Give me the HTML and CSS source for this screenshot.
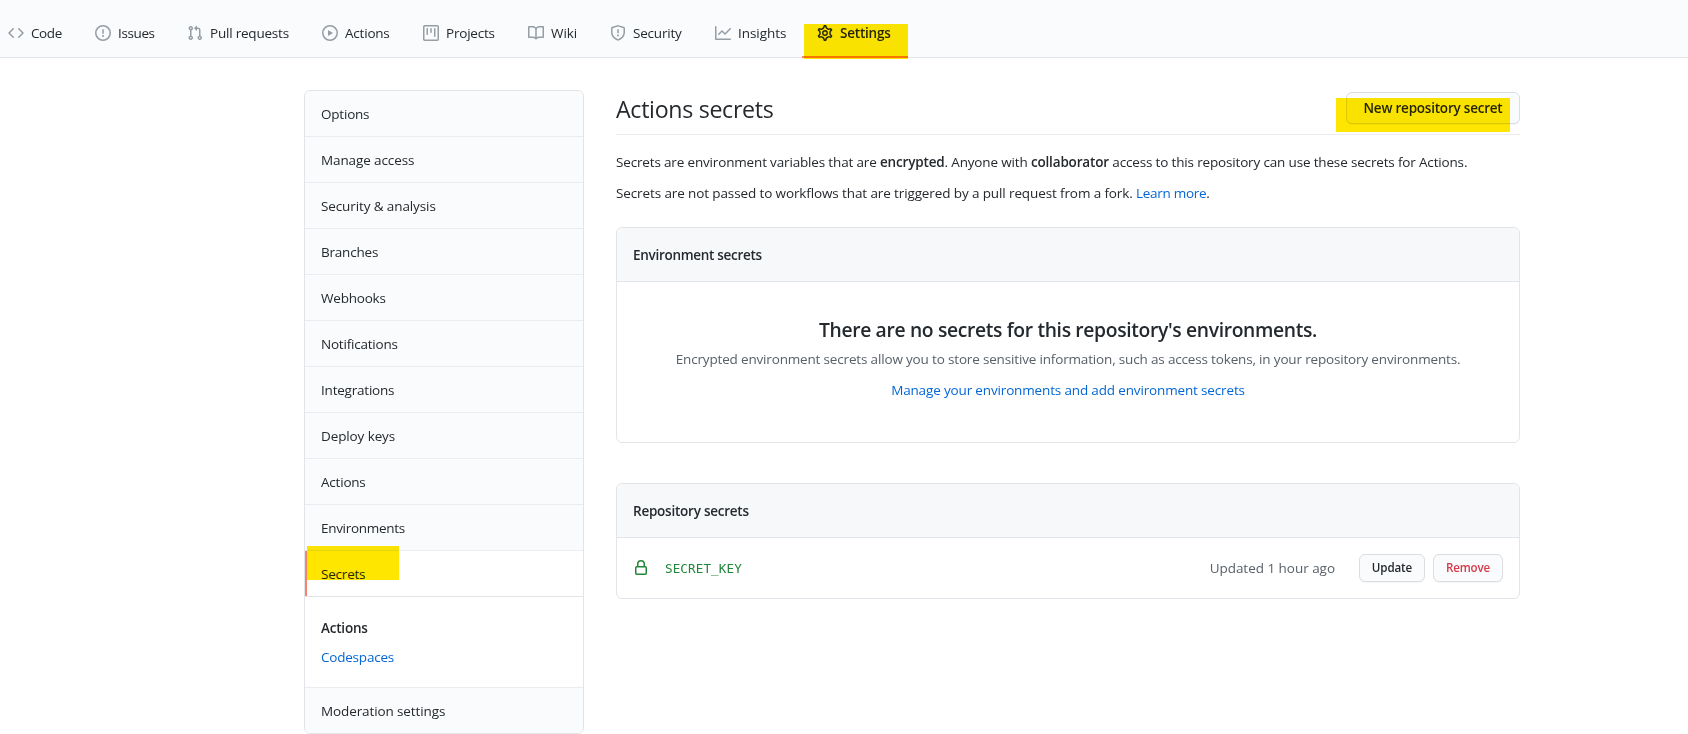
FILE: index.html
```html
<!DOCTYPE html>
<html lang="en">
<head>
<meta charset="utf-8">
<title>Actions secrets</title>
<link rel="stylesheet" href="styles.css">
</head>
<body>
<nav class="repo-nav">
  <a class="tab"><svg class="icon" viewBox="0 0 16 16"><path fill-rule="evenodd" d="M4.72 3.22a.75.75 0 011.06 1.06L2.06 8l3.72 3.72a.75.75 0 11-1.06 1.06L.47 8.53a.75.75 0 010-1.06l4.25-4.25zm6.56 0a.75.75 0 10-1.06 1.06L13.94 8l-3.72 3.72a.75.75 0 101.06 1.06l4.25-4.25a.75.75 0 000-1.06l-4.25-4.25z"/></svg><span class="tight">Code</span></a>
  <a class="tab"><svg class="icon" viewBox="0 0 16 16"><path fill-rule="evenodd" d="M8 1.5a6.5 6.5 0 100 13 6.5 6.5 0 000-13zM0 8a8 8 0 1116 0A8 8 0 010 8zm9 3a1 1 0 11-2 0 1 1 0 012 0zm-.25-6.250a.75.75 0 00-1.5 0v3.500a.75.75 0 001.500 0v-3.500z"/></svg><span class="tight">Issues</span></a>
  <a class="tab"><svg class="icon" viewBox="0 0 16 16"><path fill-rule="evenodd" d="M7.177 3.073L9.573.677A.25.25 0 0110 .854v4.792a.25.25 0 01-.427.177L7.177 3.427a.25.25 0 010-.354zM3.750 2.500a.75.75 0 100 1.500.75.75 0 000-1.500zm-2.250.75a2.250 2.250 0 113 2.122v5.256a2.251 2.251 0 11-1.500 0V5.372A2.250 2.250 0 011.500 3.250zM11 2.500h-1V4h1a1 1 0 011 1v5.628a2.251 2.251 0 101.500 0V5A2.500 2.500 0 0011 2.500zm1 10.250a.75.75 0 111.500 0 .75.75 0 01-1.500 0zM3.750 12a.75.75 0 100 1.500.75.75 0 000-1.500z"/></svg><span>Pull requests</span></a>
  <a class="tab"><svg class="icon" viewBox="0 0 16 16"><path fill-rule="evenodd" d="M1.500 8a6.500 6.500 0 1113 0 6.500 6.500 0 01-13 0zM8 0a8 8 0 100 16A8 8 0 008 0zM6.379 5.227A.25.25 0 006 5.442v5.117a.25.25 0 00.379.214l4.264-2.559a.25.25 0 000-.428L6.379 5.227z"/></svg><span>Actions</span></a>
  <a class="tab"><svg class="icon" viewBox="0 0 16 16"><path fill-rule="evenodd" d="M1.750 0A1.750 1.750 0 000 1.750v12.500C0 15.216.784 16 1.750 16h12.500A1.750 1.750 0 0016 14.250V1.750A1.750 1.750 0 0014.250 0H1.750zM1.500 1.750a.25.25 0 01.25-.25h12.500a.25.25 0 01.25.25v12.500a.25.25 0 01-.25.25H1.750a.25.25 0 01-.25-.25V1.750zM11.750 3a.75.75 0 00-.75.75v7.500a.75.75 0 001.500 0v-7.500a.75.75 0 00-.75-.75zm-8.250.75a.75.75 0 011.500 0v5.500a.75.75 0 01-1.500 0v-5.500zM8 3a.75.75 0 00-.75.75v3.500a.75.75 0 001.500 0v-3.500A.75.75 0 008 3z"/></svg><span>Projects</span></a>
  <a class="tab"><svg class="icon" viewBox="0 0 16 16"><path fill-rule="evenodd" d="M0 1.750A.75.75 0 01.75 1h4.253c1.227 0 2.317.590 3 1.501A3.744 3.744 0 0111.006 1h4.245a.75.75 0 01.75.75v10.500a.75.75 0 01-.75.75h-4.507a2.250 2.250 0 00-1.591.659l-.622.621a.75.75 0 01-1.060 0l-.622-.621A2.250 2.250 0 005.258 13H.75a.75.75 0 01-.75-.75V1.750zm8.755 3a2.250 2.250 0 012.250-2.250H14.500v9h-3.757c-.710 0-1.400.201-1.992.572l.004-7.322zm-1.504 7.324l.004-5.073-.002-2.253A2.250 2.250 0 005.003 2.500H1.500v9h3.757a3.750 3.750 0 011.994.574z"/></svg><span class="loose">Wiki</span></a>
  <a class="tab"><svg class="icon" viewBox="0 0 16 16"><path fill-rule="evenodd" d="M7.467.133a1.750 1.750 0 011.066 0l5.250 1.680A1.750 1.750 0 0115 3.480V7c0 1.566-.320 3.182-1.303 4.682-.983 1.498-2.585 2.813-5.032 3.855a1.700 1.700 0 01-1.330 0c-2.447-1.042-4.049-2.357-5.032-3.855C1.320 10.182 1 8.566 1 7V3.480a1.750 1.750 0 011.217-1.667l5.250-1.680zm.610 1.429a.25.25 0 00-.153 0l-5.250 1.680a.25.25 0 00-.174.238V7c0 1.358.275 2.666 1.057 3.860.784 1.194 2.121 2.340 4.366 3.297a.2.2 0 00.154 0c2.245-.956 3.582-2.104 4.366-3.298C13.225 9.666 13.500 8.360 13.500 7V3.480a.25.25 0 00-.174-.237l-5.250-1.680zM9 10.500a1 1 0 11-2 0 1 1 0 012 0zm-.25-5.750a.75.75 0 10-1.500 0v3a.75.75 0 001.500 0v-3z"/></svg><span>Security</span></a>
  <a class="tab"><svg class="icon" viewBox="0 0 16 16"><path fill-rule="evenodd" d="M1.500 1.750a.75.75 0 00-1.500 0v12.500c0 .414.336.75.75.75h14.500a.75.75 0 000-1.500H1.500V1.750zm14.280 2.530a.75.75 0 00-1.060-1.060L10 7.940 7.530 5.470a.75.75 0 00-1.060 0L3.220 8.720a.75.75 0 001.060 1.060L7 7.060l2.470 2.470a.75.75 0 001.060 0l5.250-5.250z"/></svg><span class="loose">Insights</span></a>
  <a class="tab selected"><svg class="icon" viewBox="0 0 16 16"><g fill="none" stroke="currentColor" stroke-width="1.35"><path transform="translate(-.88 -.88) scale(1.11)" d="M7.429 1.525a6.593 6.593 0 011.142 0c.036.003.108.036.137.146l.289 1.105c.147.56.55.967.997 1.189.174.086.341.183.501.29.417.278.97.423 1.53.27l1.102-.303c.11-.03.175.016.195.046.219.31.41.641.573.989.014.031.022.11-.059.19l-.815.806c-.411.406-.562.957-.53 1.456a4.588 4.588 0 010 .582c-.032.499.119 1.05.53 1.456l.815.806c.08.08.073.159.059.19a6.494 6.494 0 01-.573.99c-.02.029-.086.074-.195.045l-1.103-.303c-.559-.153-1.112-.008-1.529.27-.16.107-.327.204-.5.29-.449.222-.851.628-.998 1.189l-.289 1.105c-.029.11-.101.143-.137.146a6.613 6.613 0 01-1.142 0c-.036-.003-.108-.037-.137-.146l-.289-1.105c-.147-.56-.55-.967-.997-1.189a4.502 4.502 0 01-.501-.29c-.417-.278-.97-.423-1.53-.27l-1.102.303c-.11.03-.175-.016-.195-.046a6.492 6.492 0 01-.573-.989c-.014-.031-.022-.11.059-.19l.815-.806c.411-.406.562-.957.53-1.456a4.587 4.587 0 010-.582c.032-.499-.119-1.05-.53-1.456l-.815-.806c-.08-.08-.073-.159-.059-.19a6.44 6.44 0 01.573-.99c.02-.029.086-.075.195-.045l1.103.303c.559.153 1.112.008 1.529-.27.16-.107.327-.204.5-.29.449-.222.851-.628.998-1.189l.289-1.105c.029-.11.101-.143.137-.146z"/><circle cx="8" cy="8" r="2.25"/></g></svg><span>Settings</span><i class="mark mark-tab"></i></a>
</nav>
<div class="page">
  <aside class="menu">
    <a class="menu-item">Options</a>
    <a class="menu-item wide">Manage access</a>
    <a class="menu-item wide">Security &amp; analysis</a>
    <a class="menu-item">Branches</a>
    <a class="menu-item">Webhooks</a>
    <a class="menu-item">Notifications</a>
    <a class="menu-item">Integrations</a>
    <a class="menu-item wide">Deploy keys</a>
    <a class="menu-item">Actions</a>
    <a class="menu-item narrow">Environments</a>
    <a class="menu-item current">Secrets<i class="mark mark-menu"></i></a>
    <div class="submenu"><a class="active">Actions</a><a class="link">Codespaces</a></div>
    <a class="menu-item wide">Moderation settings</a>
  </aside>
  <main>
    <header class="heading">
      <h1>Actions secrets</h1>
      <button class="btn btn-new">New repository secret</button>
      <i class="mark mark-new"></i>
    </header>
    <p class="intro first">Secrets are environment variables that are <strong>encrypted</strong>. Anyone with <strong>collaborator</strong> access to this repository can use these secrets for Actions.</p>
    <p class="intro second">Secrets are not passed to workflows that are triggered by a pull request from a fork. <a class="link learn">Learn more</a>.</p>
    <section class="box">
      <h3 class="box-header environment">Environment secrets</h3>
      <div class="blank">
        <h2>There are no secrets for this repository's environments.</h2>
        <p class="muted">Encrypted environment secrets allow you to store sensitive information, such as access tokens, in your repository environments.</p>
        <p><a class="link">Manage your environments and add environment secrets</a></p>
      </div>
    </section>
    <section class="box repository">
      <h3 class="box-header">Repository secrets</h3>
      <div class="secret">
        <svg class="lock" viewBox="0 0 16 16"><path fill-rule="evenodd" d="M4 4v2h-.25A1.750 1.750 0 002 7.750v5.500c0 .966.784 1.750 1.750 1.750h8.500A1.750 1.750 0 0014 13.250v-5.500A1.750 1.750 0 0012.250 6H12V4a4 4 0 10-8 0zm6.500 2V4a2.500 2.500 0 00-5 0v2h5zM12 7.500h.25a.25.25 0 01.25.25v5.500a.25.25 0 01-.25.25h-8.500a.25.25 0 01-.25-.25v-5.500a.25.25 0 01.25-.25H12z"/></svg>
        <code>SECRET_KEY</code>
        <span class="updated">Updated 1 hour ago</span>
        <button class="btn btn-sm btn-update">Update</button>
        <button class="btn btn-sm btn-remove">Remove</button>
      </div>
    </section>
  </main>
</div>
</body>
</html>
```
FILE: styles.css
```css
* { box-sizing: border-box; }
body {
  margin: 0;
  height: 734px;
  overflow: hidden;
  background: #fff;
  color: #24292e;
  font: 13.5px/21px "Open Sans", "Noto Sans", sans-serif;
  letter-spacing: -0.21px;
}
h1, h2, h3, p { margin: 0; }
.link { color: #0366d6; }

.repo-nav {
  display: grid;
  grid-template-columns: 87px 92px 135px 101px 105px 82px 105px 103px 98px;
  height: 58px;
  padding-top: 8px;
  background: #fafbfc;
  border-bottom: 1px solid #e1e4e8;
}
.tab {
  display: flex;
  align-items: center;
  gap: 7px;
  height: 50px;
  padding-left: 8px;
  white-space: nowrap;
}
.icon { flex: none; width: 16px; height: 16px; fill: #959da5; }
.tight { letter-spacing: -0.38px; }
.loose { letter-spacing: -0.06px; }
.selected {
  position: relative;
  margin-left: -8px;
  padding-top: 2px;
  padding-left: 15px;
  border-bottom: 2px solid #f9826c;
  font-weight: 600;
}
.selected .icon { color: #24292e; }
.mark { position: absolute; background: #ffe600; mix-blend-mode: multiply; }
.mark-tab { left: 2px; right: 0; top: 16px; height: 35px; }

.page {
  display: grid;
  grid-template-columns: 280px 904px;
  gap: 32px;
  margin-left: 304px;
  padding-top: 32px;
  align-items: start;
}
.menu { border: 1px solid #e1e4e8; border-radius: 6px; }
.menu-item {
  display: block;
  height: 46px;
  padding: 13px 16px 0;
  border-bottom: 1px solid #eaecef;
  background: #fafbfc;
}
.menu-item:first-child { border-radius: 6px 6px 0 0; }
.menu-item:last-child { height: 45px; border-bottom: 0; border-radius: 0 0 6px 6px; }
.wide { letter-spacing: -0.11px; }
.narrow { letter-spacing: -0.3px; }
.current {
  position: relative;
  background: #fff;
  border-bottom-color: #e1e4e8;
  box-shadow: inset 2px 0 #f9826c;
}
.mark-menu { left: 2px; top: -5px; width: 92px; height: 34px; }
.submenu {
  display: grid;
  align-content: start;
  gap: 8px;
  height: 91px;
  padding: 21px 16px 0;
  border-bottom: 1px solid #eaecef;
}
.active { font-weight: 600; }

.heading {
  position: relative;
  display: flex;
  justify-content: space-between;
  height: 45px;
  border-bottom: 1px solid #eaecef;
}
h1 { font-size: 23.2px; line-height: 38px; font-weight: 400; letter-spacing: -0.31px; }
.btn {
  height: 32px;
  margin: 2px 0 0;
  padding: 0;
  border: 1px solid #dbdde0;
  border-radius: 6px;
  background: #fafbfc;
  color: #24292e;
  font: 600 13.5px/20px "Open Sans", "Noto Sans", sans-serif;
  letter-spacing: -0.22px;
  box-shadow: 0 1px 0 rgba(27, 31, 35, 0.04);
}
.btn-new { width: 174px; }
.mark-new { right: 10px; top: 8px; width: 174px; height: 34px; }
.intro { white-space: nowrap; }
.first { margin-top: 17px; letter-spacing: -0.162px; }
strong { font-weight: 600; letter-spacing: -0.16px; }
.second { margin-top: 10px; letter-spacing: -0.115px; }
.learn { letter-spacing: -0.3px; }
.box { margin-top: 23px; border: 1px solid #e1e4e8; border-radius: 6px; }
.box-header {
  height: 54px;
  padding: 17px 16px 0;
  border-bottom: 1px solid #e1e4e8;
  border-radius: 6px 6px 0 0;
  background: #f6f8fa;
  font-size: 13.5px;
  font-weight: 600;
  letter-spacing: -0.24px;
}
.environment { letter-spacing: -0.29px; }
.blank { height: 160px; padding-top: 33px; text-align: center; white-space: nowrap; }
h2 { font-size: 19.3px; line-height: 30px; font-weight: 600; letter-spacing: -0.34px; }
.blank p { margin-bottom: 10px; letter-spacing: -0.152px; }
.blank .muted { margin-top: 4px; letter-spacing: -0.166px; }
.muted { color: #586069; }
.repository { margin-top: 40px; }
.secret { display: flex; align-items: center; height: 60px; padding: 0 16px; }
.lock { width: 16px; height: 16px; fill: #22863a; }
code { margin-left: 16px; color: #22863a; font: 12.6px "DejaVu Sans Mono", monospace; letter-spacing: 0.1px; }
.updated { margin-left: auto; color: #586069; letter-spacing: -0.03px; }
.btn-sm { height: 28px; margin: 0 0 0 8px; font-size: 11.6px; letter-spacing: -0.12px; }
.btn-update { width: 66px; margin-left: 24px; }
.btn-remove { width: 70px; color: #d73a49; letter-spacing: -0.18px; }
```
